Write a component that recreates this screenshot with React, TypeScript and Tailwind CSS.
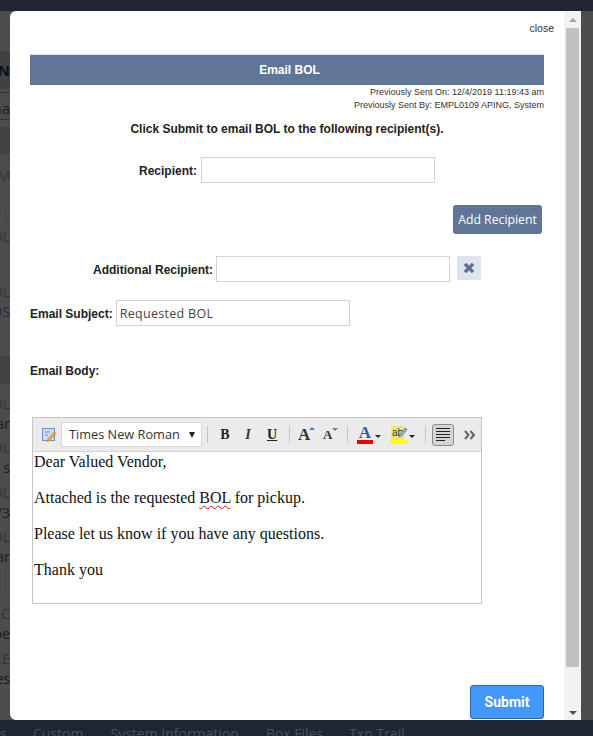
const bg = "font-['Open_Sans',sans-serif] text-[#1c1c1c]";

function StripText({ text, h, cls = "" }: { text: string; h: number; cls?: string }) {
  return (
    <div className={`flex items-center justify-end whitespace-nowrap overflow-hidden w-[10px] text-[14px] ${cls}`} style={{ height: h }}>
      <span>{text}</span>
    </div>
  );
}

function Sep() {
  return <span className="block w-px h-[17px] bg-[#c5c5c5]" />;
}

function Caret() {
  return <span className="block w-0 h-0 border-x-[3px] border-x-transparent border-t-[3px] border-t-[#222]" />;
}

export default function App() {
  return (
    <div className="relative w-[593px] h-[736px] overflow-hidden bg-[#4c4c4c] font-['Liberation_Sans',sans-serif]">
      {/* dimmed page behind the dialog */}
      <div className="h-[11px] bg-[#1e2533]" />
      <div className={`w-[10px] h-[709px] overflow-hidden flex flex-col ${bg}`}>
        <div className="h-[40px]" />
        <StripText text="IN" h={38} cls="font-bold bg-[#3f4144] text-[#111] text-[15px]" />
        <div className="h-[1px] mt-[3px] bg-[#333]" />
        <StripText text="na" h={26} cls="text-[15px] pt-[4px]" />
        <div className="h-[1px] bg-[#333]" />
        <div className="h-[7px]" />
        <div className="h-[27px] bg-[#424242]" />
        <div className="h-[10px]" />
        <StripText text="EM" h={22} cls="text-[#333] text-[12px]" />
        <div className="h-[21px]" />
        <div className="h-[17px] w-[3px] border border-l-0 border-[#555]" />
        <div className="h-[2px]" />
        <StripText text="OL" h={20} cls="text-[#333] text-[12px]" />
        <div className="h-[35px]" />
        <StripText text="OL" h={20} cls="text-[#333] text-[12px]" />
        <StripText text="US" h={20} cls="text-[#232c3c]" />
        <div className="h-[35px]" />
        <div className="h-[28px] bg-[#424242]" />
        <div className="h-[9px]" />
        <StripText text="OL" h={20} cls="text-[#333] text-[12px]" />
        <StripText text="ar" h={20} />
        <div className="h-[4px]" />
        <StripText text="OL" h={20} cls="text-[#333] text-[12px]" />
        <StripText text="s" h={20} />
        <div className="h-[5px]" />
        <StripText text="OL" h={20} cls="text-[#333] text-[12px]" />
        <StripText text="/3" h={20} />
        <div className="h-[4px]" />
        <StripText text="OL" h={20} cls="text-[#333] text-[12px]" />
        <StripText text="ar" h={20} />
        <div className="h-[1px]" />
        <div className="h-[26px] w-[3px] border border-l-0 border-[#555]" />
        <div className="h-[10px]" />
        <StripText text="EC" h={20} cls="text-[#3a3030] text-[12px]" />
        <StripText text="pe" h={20} />
        <div className="h-[5px]" />
        <StripText text="LE" h={20} cls="text-[#3a3020] text-[12px]" />
        <StripText text="es" h={20} />
      </div>
      <div className="flex h-[16px] items-start gap-[23px] bg-[#1e2533] text-[14px] leading-[16px] pt-[6px] whitespace-nowrap text-[#4a5160] font-['Open_Sans',sans-serif] -ml-[1px]">
        <span className="pl-[1px] w-[11px]">s</span>
        <span>Custom</span>
        <span className="ml-[4px]">System Information</span>
        <span className="ml-[4px]">Box Files</span>
        <span className="ml-[3px]">Txn Trail</span>
      </div>

      {/* dialog */}
      <div className="absolute left-[10px] top-[11px] w-[571px] h-[709px] bg-white rounded-l-[6px] flex overflow-hidden">
        <div className="w-[554px] h-full flex flex-col pl-[20px] pr-[20px]">
          <div className="h-[43px] flex justify-end pt-[12px] -mr-[10px] text-[10.5px] leading-[11px] text-[#333]">close</div>
          <div className="h-[31px] bg-[#607698] border-t border-[#dfe3ea] flex items-center justify-center pl-[5px] text-white font-bold text-[12px]">Email BOL</div>
          <div className="text-right text-[9px] leading-[13px] text-[#333] pt-[1px]">
            <div>Previously Sent On: 12/4/2019 11:19:43 am</div>
            <div>Previously Sent By: EMPL0109 APING, System</div>
          </div>
          <div className="mt-[10px] text-center text-[12px] leading-[14px] font-bold text-[#222]">Click Submit to email BOL to the following recipient(s).</div>

          <div className="mt-[21px] flex items-center justify-center gap-[4px]">
            <span className="pt-[1px] text-[12px] font-bold text-[#222]">Recipient:</span>
            <input className="w-[234px] h-[26px] border border-[#d2d2d2] bg-white" />
          </div>

          <div className="mt-[22px] flex justify-end pr-[2px]">
            <button className="w-[89px] h-[29px] pt-[1px] rounded-[3px] bg-[#607698] text-white text-[12.25px] font-['Open_Sans',sans-serif]">Add Recipient</button>
          </div>

          <div className="mt-[22px] flex items-start pl-[63px]">
            <span className="h-[26px] pt-[1px] flex items-center text-[12px] font-bold text-[#222]">Additional Recipient:</span>
            <input className="ml-[3px] w-[234px] h-[26px] border border-[#d2d2d2] bg-white" />
            <span className="ml-[7px] w-[24px] h-[24px] bg-[#dfe5ee] flex items-center justify-center">
              <svg width="14" height="14" viewBox="0 0 12 12"><path d="M1.5 3.5 3.5 1.5 6 4l2.5-2.5 2 2L8 6l2.5 2.5-2 2L6 8l-2.5 2.5-2-2L4 6z" fill="#5a7094" /></svg>
            </span>
          </div>

          <div className="mt-[18px] flex items-center">
            <span className="pt-[1px] text-[12px] font-bold text-[#222]">Email Subject:</span>
            <input readOnly value="Requested BOL" className="ml-[3px] w-[234px] h-[26px] border border-[#d2d2d2] bg-white px-[3px] text-[12.5px] tracking-[0.3px] text-[#444] font-['Open_Sans',sans-serif]" />
          </div>

          <div className="mt-[38px] text-[12px] leading-[14px] font-bold text-[#222]">Email Body:</div>

          <div className="mt-[39px] ml-[2px] w-[450px] h-[187px] border border-[#c5c5c5] flex flex-col">
            <div className="h-[34px] shrink-0 bg-[#ebebeb] border-b border-[#d5d5d5] flex items-center text-[#333]">
              <span className="ml-[8px] w-[16px] h-[16px] flex items-center justify-center">
                <svg width="16" height="16" viewBox="0 0 16 16">
                  <rect x="1.5" y="1.5" width="12" height="12" fill="#cfdcf4" stroke="#6d8fc9" />
                  <path d="M4 5h5M4 8h3" stroke="#6d8fc9" />
                  <path d="M7 12 13 5l2 1.5-6 7-3 1z" fill="#e9b23f" stroke="#a87a20" strokeWidth=".6" />
                </svg>
              </span>
              <span className="ml-[4px] w-[141px] h-[25px] bg-white border border-[#d8d8d8] flex items-center justify-between pl-[7px] pr-[6px] text-[12.75px] text-[#333] font-['Open_Sans',sans-serif] whitespace-nowrap">
                Times New Roman
                <span className="block w-0 h-0 border-x-[3.5px] border-x-transparent border-t-[6px] border-t-[#222]" />
              </span>
              <span className="ml-[5px]"><Sep /></span>
              <span className="ml-[12px] w-[10px] text-center font-['Liberation_Serif',serif] font-bold text-[14px] text-[#222]">B</span>
              <span className="ml-[13px] w-[10px] text-center font-['Liberation_Serif',serif] font-bold italic text-[14px] text-[#333]">I</span>
              <span className="ml-[14px] w-[10px] text-center font-['Liberation_Serif',serif] font-bold underline text-[14px] text-[#222]">U</span>
              <span className="ml-[12px]"><Sep /></span>
              <span className="ml-[8px] w-[16px] relative font-['Liberation_Serif',serif] font-bold text-[17px] leading-[16px] text-[#333]">
                A
                <span className="absolute left-[11px] top-[0px] w-0 h-0 border-x-[3px] border-x-transparent border-b-[3px] border-b-[#5a7fb5]" />
              </span>
              <span className="ml-[9px] w-[16px] relative font-['Liberation_Serif',serif] font-bold text-[13px] leading-[16px] text-[#333]">
                A
                <span className="absolute left-[9px] top-[1px] w-0 h-0 border-x-[3px] border-x-transparent border-t-[3px] border-t-[#5a7fb5]" />
              </span>
              <span className="ml-[8px]"><Sep /></span>
              <span className="ml-[9px] w-[16px] flex flex-col items-center">
                <span className="font-['Liberation_Serif',serif] font-bold text-[17px] leading-[14px] text-[#3a5a9c]">A</span>
                <span className="w-[16px] h-[4px] bg-[#f00000]" />
              </span>
              <span className="ml-[2px] mt-[4px]"><Caret /></span>
              <span className="ml-[10px] w-[16px] flex flex-col items-center relative">
                <span className="self-start bg-[#eaea70] text-[10px] leading-[14px] text-[#333] px-[1px] font-['Liberation_Sans',sans-serif]">ab</span>
                <svg className="absolute left-[7px] top-[1px]" width="10" height="11" viewBox="0 0 10 11"><path d="M1 10 2 7l5-6 2 1.5-5 6z" fill="#9db7dc" stroke="#55709c" strokeWidth=".8" /></svg>
                <span className="w-[16px] h-[4px] bg-[#ffff00]" />
              </span>
              <span className="ml-[2px] mt-[4px]"><Caret /></span>
              <span className="ml-[10px]"><Sep /></span>
              <span className="ml-[6px] w-[22px] h-[22px] rounded-[3px] border border-[#8c8c8c] bg-[#d4d4d4] flex flex-col justify-center items-start pl-[3px] gap-[2px]">
                <span className="w-[14px] h-px bg-[#222]" />
                <span className="w-[14px] h-px bg-[#222]" />
                <span className="w-[14px] h-px bg-[#222]" />
                <span className="w-[14px] h-px bg-[#222]" />
                <span className="w-[9px] h-px bg-[#222]" />
              </span>
              <span className="ml-[10px]">
                <svg width="12" height="10" viewBox="0 0 12 10" className="block"><path d="M1 1l3.5 4L1 9M6.5 1 10 5 6.5 9" fill="none" stroke="#5b6472" strokeWidth="2" /></svg>
              </span>
            </div>
            <div className="flex-1 pl-[1px] pt-[1px] font-['Liberation_Serif',serif] text-[16px] leading-[18px] text-[#111]">
              <p>Dear Valued Vendor,</p>
              <p className="mt-[18px]">Attached is the requested <span className="underline decoration-wavy decoration-[#e01010] decoration-[1px] underline-offset-2">BOL</span> for pickup.</p>
              <p className="mt-[18px]">Please let us know if you have any questions.</p>
              <p className="mt-[18px]">Thank you</p>
            </div>
          </div>

          <div className="mt-[81px] flex justify-end">
            <button className="w-[74px] h-[34px] rounded-[3px] bg-[#4299fb] border border-[#2c6bb0] text-white font-bold text-[14px] font-['Roboto',sans-serif]">Submit</button>
          </div>
        </div>

        {/* scrollbar */}
        <div className="w-[17px] h-full bg-[#f1f1f1] flex flex-col items-center">
          <div className="h-[17px] flex items-center justify-center">
            <span className="block w-0 h-0 border-x-[4px] border-x-transparent border-b-[4px] border-b-[#a3a3a3]" />
          </div>
          <div className="w-[13px] h-[639px] bg-[#c1c1c1]" />
          <div className="flex-1 flex items-end pb-[5px]">
            <span className="block w-0 h-0 border-x-[4px] border-x-transparent border-t-[4px] border-t-[#505050]" />
          </div>
        </div>
      </div>
    </div>
  );
}
